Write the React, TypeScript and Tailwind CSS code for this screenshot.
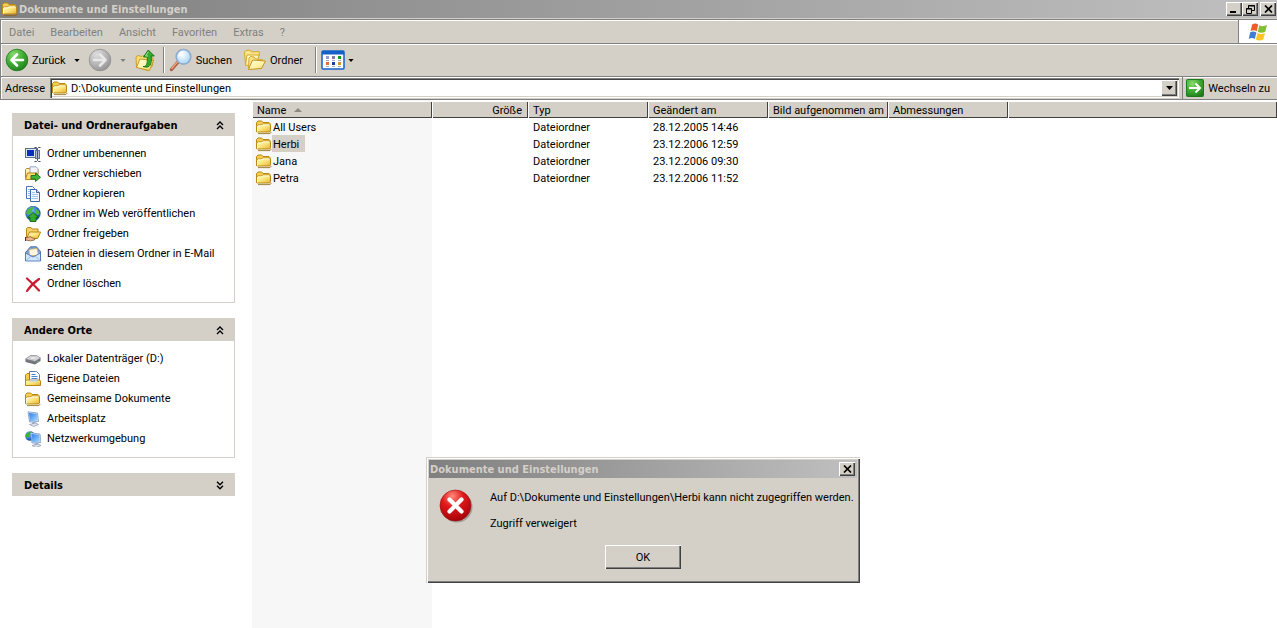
import React, { useState } from "react";

interface IconProps {
  className?: string;
}

interface TaskItem {
  label: string;
  icon: React.ReactNode;
}

interface FolderRow {
  name: string;
  type: string;
  modified: string;
  selected?: boolean;
}

const RAISED =
  "bg-[#d4d0c8] shadow-[inset_1px_1px_#ffffff,inset_-1px_-1px_#404040,inset_-2px_-2px_#808080]";

const BOLD = "font-['DejaVu_Sans_Condensed','DejaVu_Sans',sans-serif] font-bold";

// Shared gradients, referenced by id from the icons below
const IconDefs = () => (
  <svg className="absolute size-0" aria-hidden="true">
    <defs>
      <linearGradient id="folder" x1="0" y1="0" x2="1" y2="1">
        <stop offset="0" stopColor="#fffbc4" />
        <stop offset="0.5" stopColor="#fce57c" />
        <stop offset="1" stopColor="#e5b02c" />
      </linearGradient>
      <linearGradient id="paper" x1="0" y1="0" x2="1" y2="1">
        <stop offset="0" stopColor="#fffde0" />
        <stop offset="0.6" stopColor="#fdf0a0" />
        <stop offset="1" stopColor="#f2cc50" />
      </linearGradient>
      <radialGradient id="green" cx="0.35" cy="0.25" r="0.85">
        <stop offset="0" stopColor="#8ada70" />
        <stop offset="0.5" stopColor="#42ac34" />
        <stop offset="1" stopColor="#1c7a18" />
      </radialGradient>
      <radialGradient id="gray" cx="0.35" cy="0.25" r="0.85">
        <stop offset="0" stopColor="#dedede" />
        <stop offset="0.6" stopColor="#b0b0b0" />
        <stop offset="1" stopColor="#8c8c8c" />
      </radialGradient>
      <radialGradient id="red" cx="0.4" cy="0.2" r="0.85">
        <stop offset="0" stopColor="#ff8a7a" />
        <stop offset="0.4" stopColor="#e01b1b" />
        <stop offset="1" stopColor="#a00008" />
      </radialGradient>
      <radialGradient id="glass" cx="0.4" cy="0.35" r="0.7">
        <stop offset="0" stopColor="#ffffff" />
        <stop offset="1" stopColor="#a3d2f5" />
      </radialGradient>
      <radialGradient id="globe" cx="0.35" cy="0.3" r="0.8">
        <stop offset="0" stopColor="#8cc8f8" />
        <stop offset="0.6" stopColor="#2a6fd0" />
        <stop offset="1" stopColor="#123d8c" />
      </radialGradient>
      <linearGradient id="screen" x1="0" y1="0" x2="1" y2="1">
        <stop offset="0" stopColor="#2f7de8" />
        <stop offset="1" stopColor="#a8dcff" />
      </linearGradient>
    </defs>
  </svg>
);

const FolderIcon = ({ className = "size-4" }: IconProps) => (
  <svg viewBox="0 0 16 16" className={className} aria-hidden="true">
    <path d="M.5 12.500V3.500L2 2h3.600L7 3.500h6l1 1v8z" fill="#f6cf52" stroke="#b98714" />
    <path d="M.5 12.500V7l1-1h4l1-1h7l1 1v5.500l-1 1.500h-12z" fill="url(#folder)" stroke="#b98714" />
    <path d="M1.500 12.500v-5l.7-.6h3.600l1-1h6.500" fill="none" stroke="#fffde0" />
    <path d="M2 14.600h12l1.300-1.600" fill="none" stroke="#8a6410" strokeWidth="0.8" />
  </svg>
);

const OpenFolderShape = () => (
  <>
    <path d="M1.500 12V2.500l1-1H6l1 1.500h6v3" fill="#f4d264" stroke="#b98714" />
    <path d="M1.500 12.500 4.600 6h11l-3 6.500z" fill="url(#folder)" stroke="#b98714" />
  </>
);

const BackIcon = () => (
  <svg viewBox="0 0 24 24" className="size-6" aria-hidden="true">
    <circle cx="12" cy="12" r="10.8" fill="url(#green)" stroke="#1d7a1d" strokeWidth="0.8" />
    <path d="M18 12H7M12 6.500 6.500 12l5.500 5.500" fill="none" stroke="#fff" strokeWidth="2.600" strokeLinecap="round" strokeLinejoin="round" />
  </svg>
);

const ForwardIcon = () => (
  <svg viewBox="0 0 24 24" className="size-6" aria-hidden="true">
    <circle cx="12" cy="12" r="10.8" fill="url(#gray)" stroke="#8f8f8f" strokeWidth="0.8" />
    <path d="M6 12h11M12 6.500l5.500 5.500-5.500 5.500" fill="none" stroke="#e8e8e8" strokeWidth="2.600" strokeLinecap="round" strokeLinejoin="round" />
  </svg>
);

const UpIcon = () => (
  <svg viewBox="0 0 22 24" className="h-6 w-[22px]" aria-hidden="true">
    <path d="M2.500 19 2 9l2-1.500 4 1 1-1 10 2.500-.5 8-5 4.500z" fill="#f6dc74" stroke="#c89a24" strokeWidth="0.900" />
    <path d="M2.500 19.500 6 11l13.500 1.500-4 10z" fill="url(#paper)" stroke="#c08e1c" strokeWidth="0.900" />
    <path d="M9 18.500c3.500.5 4.600-2.500 4.300-9.500H9.500l4.800-7 6 6h-3.100c.8 8-1 13-8.200 10.500z" fill="#35ab2c" stroke="#126f12" strokeWidth="0.900" />
    <path d="M14.400 3.800 11.500 8h2.500" fill="none" stroke="#a2e795" />
  </svg>
);

const SearchIcon = () => (
  <svg viewBox="0 0 24 24" className="size-6" aria-hidden="true">
    <path d="M9 14 2.500 21.500" stroke="#a85c40" strokeWidth="3.400" strokeLinecap="round" />
    <path d="M8.500 13.800 2.800 20.500" stroke="#eea078" strokeWidth="1.500" strokeLinecap="round" />
    <circle cx="14.500" cy="8.800" r="7.300" fill="url(#glass)" stroke="#8fabd0" strokeWidth="1.600" />
    <path d="M10 8a5 5 0 0 1 4-4" fill="none" stroke="#fff" strokeWidth="1.600" />
  </svg>
);

const FoldersIcon = () => (
  <svg viewBox="0 0 24 24" className="size-6" aria-hidden="true">
    <path d="M2.500 17 1.500 4 3 2.500l4-.5 1.500 2L16 3.500l.5 4" fill="#f9e488" stroke="#d4a834" />
    <path d="M2.500 17.500 4 7h12l-2 8.500z" fill="url(#paper)" stroke="#d4a834" />
    <path d="M5.500 20.500 6 10l1.500-1.500 3.500.5 1.500 2 7 .5v2" fill="#f9e488" stroke="#d4a834" />
    <path d="M5.500 21.500 9.500 12l13 1-4 7.500z" fill="url(#paper)" stroke="#c4941e" />
  </svg>
);

const ViewsIcon = () => (
  <svg viewBox="0 0 24 20" className="h-5 w-6" aria-hidden="true">
    <rect x="1" y="1" width="22" height="18" rx="1" fill="#fff" stroke="#1560c8" strokeWidth="1.500" />
    <rect x="1" y="1" width="22" height="3.500" fill="#1560c8" />
    <rect x="5" y="6" width="3" height="3" fill="#9a9ac8" />
    <rect x="11" y="6" width="3" height="3" fill="#7c7ca8" />
    <rect x="17" y="6" width="3" height="3" fill="#0f9a20" />
    <rect x="5" y="12" width="3" height="3" fill="#ee6a3c" />
    <rect x="11" y="12" width="3" height="3" fill="#1c3ca8" />
    <rect x="17" y="12" width="3" height="3" fill="#d8942c" />
    <path d="M5 10.500h3M11 10.500h3M17 10.500h3M5 16.500h3M11 16.500h3M17 16.500h3" stroke="#a8aec0" />
  </svg>
);

const GoIcon = () => (
  <svg viewBox="0 0 18 18" className="size-[18px]" aria-hidden="true">
    <rect x="0.500" y="0.500" width="17" height="17" rx="1" fill="url(#green)" stroke="#1d7a1d" />
    <path d="M3 9h11M9.500 4.500 14 9l-4.500 4.500" fill="none" stroke="#fff" strokeWidth="2" />
  </svg>
);

const WindowsLogo = () => (
  <svg viewBox="0 0 20 20" className="size-5" aria-hidden="true">
    <path d="M4.200 2.500c2-1.300 4-1.200 6 .1L8.700 9.200c-2-1.300-4-1.200-6.200-.1z" fill="#ee5a28" />
    <path d="M11.300 3.200c2 1.200 4 1.300 7.700-.1l-1.700 6.600c-2.800 1.300-5.400 1.200-7.500 0z" fill="#84bd3a" />
    <path d="M2.200 10.300c2.200-1.200 4.200-1.100 6.200.1L6.800 17c-2-1.300-4-1.200-6.100-.1z" fill="#3f7fd8" />
    <path d="M9.500 11c2 1.200 4.200 1.300 7.500.1l-1.700 6.500c-2.700 1.300-5.300 1.200-7.400 0z" fill="#fcc528" />
  </svg>
);

const RenameIcon = () => (
  <svg viewBox="0 0 16 16" className="size-4" aria-hidden="true">
    <rect x="0.500" y="2.500" width="11" height="9" fill="#dfe6f4" stroke="#5c6c90" />
    <rect x="2" y="4" width="7" height="6" fill="#0a2fc0" />
    <path d="M9.500 1.500h2l1 1 1-1h2M12.500 2.500v12M9.500 15.500h2l1-1 1 1h2" fill="none" stroke="#47506a" />
    <rect x="10.500" y="4.500" width="4" height="8" fill="#b4bed6" stroke="#66708c" />
    <path d="M12.500 5v7" stroke="#47506a" />
  </svg>
);

const MoveIcon = () => (
  <svg viewBox="0 0 16 16" className="size-4" aria-hidden="true">
    <path d="M.5 12V3.500l1-1h3l1 1H13V12z" fill="url(#folder)" stroke="#b98714" />
    <path d="M5 .8h6l2 2V8H5z" fill="#eef4fc" stroke="#8098bc" strokeWidth="0.800" />
    <path d="M.5 13.500 2.500 7H12l-1.500 6.500z" fill="#f8dc78" stroke="#b98714" />
    <path d="M6 9.500h4.500V7l5 4.300-5 4.200V13H6z" fill="#3fb434" stroke="#14701a" strokeWidth="0.900" />
  </svg>
);

const CopyIcon = () => (
  <svg viewBox="0 0 16 16" className="size-4" aria-hidden="true">
    <path d="M1.500.5h6l2 2v10h-8z" fill="#fff" stroke="#4a74b4" />
    <path d="M3 3.500h4M3 5.500h2M3 7.500h2M3 9.500h2" stroke="#9cbce8" />
    <path d="M5.500 3.500h6l3 3v9h-9z" fill="#f4f9ff" stroke="#3c68ac" />
    <path d="M11.500 3.500v3h3" fill="#c4dcf8" stroke="#3c68ac" />
    <path d="M7 6.500h3M7 8.500h6M7 10.500h6M7 12.500h6" stroke="#a4c4ec" />
  </svg>
);

const PublishIcon = () => (
  <svg viewBox="0 0 16 16" className="size-4" aria-hidden="true">
    <circle cx="8" cy="7.500" r="7.300" fill="url(#globe)" stroke="#23508c" strokeWidth="0.600" />
    <path d="M2 4.500C4 1.500 7 .8 9 1.500L7 4l.5 2L4 8.500 1.200 8zM11 3l3 2 .8 3.500L12 9l-2-3z" fill="#4cb848" />
    <path d="m8 6.500 5.500 5H11V15.500H5v-4H2.500z" fill="#35ab2c" stroke="#0f6614" strokeWidth="0.900" />
  </svg>
);

const ShareIcon = () => (
  <svg viewBox="0 0 16 16" className="size-4" aria-hidden="true">
    <OpenFolderShape />
    <path d="M0 11.500h3l2-1 3 1.500 2 .5-.5 1.500-4 .8L0 14z" fill="#ecb888" stroke="#7c4c20" strokeWidth="0.700" />
    <path d="M0 11v4" stroke="#26386c" strokeWidth="2" />
  </svg>
);

const MailIcon = () => (
  <svg viewBox="0 0 16 16" className="size-4" aria-hidden="true">
    <path d="M.5 6.500 5.500.8h6l4 4.700v9H.5z" fill="#7ba4dc" stroke="#4068a4" strokeWidth="0.900" />
    <path d="M4 3.500 12 2.500l1.500 7h-9z" fill="#fff6e0" stroke="#d8a860" strokeWidth="0.700" />
    <path d="m.5 7 7.500 4 7.500-4v8H.5z" fill="#d4e6fb" stroke="#4c78b8" strokeWidth="0.900" />
    <path d="m1.500 14 4.500-4M14.500 14 10 10" stroke="#88aee0" strokeWidth="0.800" />
  </svg>
);

const DeleteIcon = () => (
  <svg viewBox="0 0 16 16" className="size-4" aria-hidden="true">
    <path d="M2 2.500C6 6 10 10 14 14.500M14 3C9 6.500 5 10.500 2 15" fill="none" stroke="#cc1a30" strokeWidth="2.200" strokeLinecap="round" />
  </svg>
);

const DriveIcon = () => (
  <svg viewBox="0 0 16 16" className="size-4" aria-hidden="true">
    <path d="m.5 8 5-3.500h6l4 2.500v3L10 13.500.5 11z" fill="#74747c" />
    <path d="m.5 8 5-3.500h6l4 2.500-5.500 3.300z" fill="#dcdce0" stroke="#84848c" strokeWidth="0.600" />
    <ellipse cx="8" cy="7" rx="3.500" ry="1.300" fill="#f6f6f8" stroke="#a4a4ac" strokeWidth="0.600" />
    <path d="M12 10.800h1.500" stroke="#5ce04c" />
  </svg>
);

const MyDocumentsIcon = () => (
  <svg viewBox="0 0 16 16" className="size-4" aria-hidden="true">
    <path d="M.5 14V4L2 2.500h2.500V14z" fill="#f6cf52" stroke="#b98714" />
    <path d="M4.500.5h7l3 3V12h-10z" fill="#fff" stroke="#5880b8" />
    <path d="M6.500 3.500h4M6.500 5.500h6M6.500 7.500h6" stroke="#4c84d8" />
    <path d="M.5 14.500V10l1-1h13l1 1v4.500z" fill="url(#folder)" stroke="#b98714" />
    <path d="M4.500 8.500h8v2h-8z" fill="#b4cdf0" />
  </svg>
);

const ComputerShape = () => (
  <>
    <path d="M3 .8 12.500 2l1 8.500L4.500 11z" fill="#dce8f6" stroke="#7c98c4" strokeWidth="0.800" />
    <path d="M4 1.900 11.800 2.800l.8 7-7.700.4z" fill="url(#screen)" />
    <path d="m7 11 3.500-.3.500 2.300h-4z" fill="#a8b4cc" />
    <path d="m4.500 13.500 6-1.500 3 1.500-5 2z" fill="#dfe3ec" stroke="#8c94ac" strokeWidth="0.700" />
  </>
);

const ComputerIcon = () => (
  <svg viewBox="0 0 16 16" className="size-4" aria-hidden="true">
    <ComputerShape />
  </svg>
);

const NetworkIcon = () => (
  <svg viewBox="0 0 16 16" className="size-4" aria-hidden="true">
    <circle cx="5" cy="5" r="4.800" fill="url(#globe)" />
    <path d="M1 3.500C2.500 1 5 .3 7 1L5 4 3 7 .8 6z" fill="#3fae3c" />
    <g transform="translate(2.500 1)">
      <ComputerShape />
    </g>
  </svg>
);

const ErrorIcon = () => (
  <svg viewBox="0 0 34 34" className="size-[34px] shrink-0" aria-hidden="true">
    <circle cx="18" cy="18" r="15.500" fill="#8d8a84" opacity="0.700" />
    <circle cx="16.500" cy="16.500" r="15.500" fill="url(#red)" stroke="#9c1010" strokeWidth="0.600" />
    <path d="m10.500 10.500 12 12M22.500 10.500l-12 12" stroke="#fff" strokeWidth="4.200" strokeLinecap="round" />
  </svg>
);

const CloseGlyph = () => (
  <svg viewBox="0 0 9 8" className="h-2 w-[9px]" aria-hidden="true">
    <path d="m1 .5 7 7M8 .5l-7 7" stroke="#000" strokeWidth="1.700" />
  </svg>
);

const CaretDown = ({ className = "h-1 w-[7px] fill-black" }: IconProps) => (
  <svg viewBox="0 0 7 4" className={className} aria-hidden="true">
    <path d="M0 0h7L3.500 4z" />
  </svg>
);

const Chevrons = ({ down = false }: { down?: boolean }) => (
  <svg viewBox="0 0 8 9" className="h-[9px] w-2" fill="none" stroke="#000" strokeWidth="1.400" aria-hidden="true">
    <path d={down ? "m1 .8 3 3 3-3M1 4.800l3 3 3-3" : "m1 4 3-3 3 3M1 8l3-3 3 3"} />
  </svg>
);

const menuItems = ["Datei", "Bearbeiten", "Ansicht", "Favoriten", "Extras", "?"];

const folderTasks: TaskItem[] = [
  { label: "Ordner umbenennen", icon: <RenameIcon /> },
  { label: "Ordner verschieben", icon: <MoveIcon /> },
  { label: "Ordner kopieren", icon: <CopyIcon /> },
  { label: "Ordner im Web veröffentlichen", icon: <PublishIcon /> },
  { label: "Ordner freigeben", icon: <ShareIcon /> },
  { label: "Dateien in diesem Ordner in E-Mail senden", icon: <MailIcon /> },
  { label: "Ordner löschen", icon: <DeleteIcon /> },
];

const otherPlaces: TaskItem[] = [
  { label: "Lokaler Datenträger (D:)", icon: <DriveIcon /> },
  { label: "Eigene Dateien", icon: <MyDocumentsIcon /> },
  { label: "Gemeinsame Dokumente", icon: <FolderIcon /> },
  { label: "Arbeitsplatz", icon: <ComputerIcon /> },
  { label: "Netzwerkumgebung", icon: <NetworkIcon /> },
];

const rows: FolderRow[] = [
  { name: "All Users", type: "Dateiordner", modified: "28.12.2005 14:46" },
  { name: "Herbi", type: "Dateiordner", modified: "23.12.2006 12:59", selected: true },
  { name: "Jana", type: "Dateiordner", modified: "23.12.2006 09:30" },
  { name: "Petra", type: "Dateiordner", modified: "23.12.2006 11:52" },
];

const TitleBar = () => (
  <header className="flex h-[18px] items-center bg-linear-to-r from-[#808080] to-[#c0c0c0] pr-px pl-0.5">
    <FolderIcon />
    <h1 className={`flex-1 pl-px text-[#d4d0c8] ${BOLD}`}>Dokumente und Einstellungen</h1>
    <button aria-label="Minimieren" className={`flex h-[14px] w-4 items-end pb-[3px] pl-1 ${RAISED}`}>
      <span className="h-0.5 w-1.5 bg-black" />
    </button>
    <button aria-label="Wiederherstellen" className={`flex h-[14px] w-4 items-center justify-center ${RAISED}`}>
      <svg viewBox="0 0 9 9" className="size-[9px]" fill="none" stroke="#000" aria-hidden="true">
        <path d="M2.500 3V.5h6v5H6M2 1h7" />
        <path d="M.5 3.500h5v5h-5zM0 4h6" />
      </svg>
    </button>
    <button aria-label="Schließen" className={`ml-0.5 flex h-[14px] w-4 items-center justify-center ${RAISED}`}>
      <CloseGlyph />
    </button>
  </header>
);

const MenuBar = () => (
  <div className="flex h-[25px] border-y border-l border-[#808080] shadow-[inset_1px_1px_#ffffff]">
    <nav className="flex flex-1 items-center border-r border-[#808080]">
      {menuItems.map((item) => (
        <button key={item} className="px-2 pt-px text-[#808080]">
          {item}
        </button>
      ))}
    </nav>
    <div className="flex w-[38px] items-center justify-center bg-white">
      <WindowsLogo />
    </div>
  </div>
);

const Separator = () => <div className="h-[26px] w-0.5 border-r border-l border-r-white border-l-[#808080]" />;

const Toolbar = () => (
  <div className="flex h-[33px] items-center border-b border-l border-[#808080] pl-1 shadow-[inset_1px_1px_#ffffff]">
    <button className="flex items-center gap-[3px]">
      <BackIcon />
      Zurück
    </button>
    <button aria-label="Zurück-Verlauf" className="px-2">
      <CaretDown className="h-[3px] w-[6px] fill-black" />
    </button>
    <button aria-label="Vorwärts" disabled>
      <ForwardIcon />
    </button>
    <button aria-label="Vorwärts-Verlauf" className="px-2" disabled>
      <CaretDown className="h-[3px] w-[6px] fill-[#808080]" />
    </button>
    <button aria-label="Aufwärts" className="mr-[7px]">
      <UpIcon />
    </button>
    <Separator />
    <button className="ml-1 flex items-center gap-[3px]">
      <SearchIcon />
      Suchen
    </button>
    <button className="mr-3 ml-[11px] flex items-center gap-[3px]">
      <FoldersIcon />
      Ordner
    </button>
    <Separator />
    <button aria-label="Ansichten" className="ml-1 flex items-center gap-[3px]">
      <ViewsIcon />
      <CaretDown className="h-[3px] w-[6px] fill-black" />
    </button>
  </div>
);

const AddressBar = () => {
  const [path, setPath] = useState("D:\\Dokumente und Einstellungen");

  return (
    <div className="flex h-[23px] items-center border-b border-l border-[#808080] pl-1 shadow-[inset_1px_1px_#ffffff]">
      <label htmlFor="address" className="w-[45px]">
        Adresse
      </label>
      <div className="flex h-[20px] flex-1 items-center bg-white p-0.5 shadow-[inset_1px_1px_#808080,inset_2px_2px_#404040,inset_-1px_-1px_#ffffff,inset_-2px_-2px_#d4d0c8]">
        <FolderIcon />
        <input
          id="address"
          type="text"
          value={path}
          onChange={(e) => setPath(e.target.value)}
          className="min-w-0 flex-1 bg-transparent pt-px pl-[3px] outline-none"
        />
        <button aria-label="Adressliste öffnen" className={`flex h-4 w-4 items-center justify-center ${RAISED}`}>
          <CaretDown />
        </button>
      </div>
      <div className="mr-[3px] ml-[3px] h-[22px] w-px bg-[#808080]" />
      <button className="flex items-center gap-1 pr-[7px]">
        <GoIcon />
        Wechseln zu
      </button>
    </div>
  );
};

interface TaskPanelProps {
  title: string;
  items?: TaskItem[];
}

const TaskPanel = ({ title, items }: TaskPanelProps) => (
  <section>
    <button className={`flex h-[23px] w-full items-center justify-between bg-[#d4d0c8] pt-0.5 pr-[11px] pl-3 ${BOLD}`}>
      <h2>{title}</h2>
      <Chevrons down={!items} />
    </button>
    {items && (
      <ul className="space-y-1 border border-t-0 border-[#d4d0c8] px-3 pt-[11px] pb-[9px]">
        {items.map((item) => (
          <li key={item.label} className="min-h-4">
            <a href="#" className="flex items-start gap-1.5">
              <span className="-mt-px shrink-0">{item.icon}</span>
              <span>{item.label}</span>
            </a>
          </li>
        ))}
      </ul>
    )}
  </section>
);

const Th = ({ children, className = "px-[5px]" }: { children?: React.ReactNode; className?: string }) => (
  <th
    className={`h-[17px] bg-[#d4d0c8] pt-px text-left font-normal whitespace-nowrap shadow-[inset_1px_1px_#ffffff,inset_-1px_-1px_#404040] ${className}`}
  >
    {children}
  </th>
);

const FileList = () => (
  <div className="min-w-0 flex-1 bg-[linear-gradient(to_right,#f7f7f7_180px,#ffffff_180px)] pt-px">
    <table className="w-full table-fixed border-collapse">
      <colgroup>
        <col className="w-[180px]" />
        <col className="w-24" />
        <col className="w-[120px]" />
        <col className="w-[120px]" />
        <col className="w-[120px]" />
        <col className="w-[120px]" />
        <col />
      </colgroup>
      <thead>
        <tr>
          <Th>
            Name
            <svg viewBox="0 0 8 4" className="mb-0.5 ml-2 inline h-1 w-2" aria-hidden="true">
              <path d="M0 4h8L4 0z" fill="#8c8880" />
            </svg>
          </Th>
          <Th className="px-1.5 text-right">Größe</Th>
          <Th>Typ</Th>
          <Th>Geändert am</Th>
          <Th>Bild aufgenommen am</Th>
          <Th>Abmessungen</Th>
          <Th />
        </tr>
      </thead>
      <tbody>
        {rows.map((row) => (
          <tr key={row.name} className="h-[17px]">
            <td className="pl-1">
              <div className="flex h-[17px] items-center">
                <FolderIcon />
                <span className={`flex h-full items-center pt-0.5 pr-1.5 pl-px ${row.selected ? "bg-[#d4d0c8]" : ""}`}>
                  {row.name}
                </span>
              </div>
            </td>
            <td />
            <td className="px-[5px] pt-0.5">{row.type}</td>
            <td className="px-[5px] pt-0.5">{row.modified}</td>
            <td />
            <td />
            <td />
          </tr>
        ))}
      </tbody>
    </table>
  </div>
);

const ErrorDialog = ({ onClose }: { onClose: () => void }) => (
  <div
    role="alertdialog"
    aria-labelledby="error-title"
    className="absolute top-[457px] left-[426px] w-[434px] bg-[#d4d0c8] p-[3px] pb-[14px] shadow-[inset_1px_1px_#d4d0c8,inset_2px_2px_#ffffff,inset_-1px_-1px_#404040,inset_-2px_-2px_#808080]"
  >
    <div className="flex h-[18px] items-center bg-linear-to-r from-[#808080] to-[#c0c0c0] pr-0.5 pl-px">
      <h2 id="error-title" className={`flex-1 text-[#d4d0c8] ${BOLD}`}>
        Dokumente und Einstellungen
      </h2>
      <button aria-label="Schließen" onClick={onClose} className={`flex h-[14px] w-4 items-center justify-center ${RAISED}`}>
        <CloseGlyph />
      </button>
    </div>
    <div className="flex gap-[17px] px-2.5 pt-[11px]">
      <ErrorIcon />
      <div className="space-y-[13px] pt-0.5">
        <p className="whitespace-nowrap">Auf D:\Dokumente und Einstellungen\Herbi kann nicht zugegriffen werden.</p>
        <p>Zugriff verweigert</p>
      </div>
    </div>
    <button onClick={onClose} className={`mx-auto mt-[15px] block h-6 w-[76px] ${RAISED}`}>
      OK
    </button>
  </div>
);

export default function App() {
  const [showError, setShowError] = useState(true);

  return (
    <div className="relative flex min-h-screen flex-col bg-white font-['Roboto',sans-serif] text-[11px] leading-[13px] text-black">
      <IconDefs />
      <TitleBar />
      <div className="bg-[#d4d0c8] pt-px">
        <MenuBar />
        <Toolbar />
        <AddressBar />
      </div>
      <main className="flex flex-1">
        <aside className="w-[252px] shrink-0 space-y-[15px] pt-[13px] pr-[17px] pl-3">
          <TaskPanel title="Datei- und Ordneraufgaben" items={folderTasks} />
          <TaskPanel title="Andere Orte" items={otherPlaces} />
          <TaskPanel title="Details" />
        </aside>
        <FileList />
      </main>
      {showError && <ErrorDialog onClose={() => setShowError(false)} />}
    </div>
  );
}
